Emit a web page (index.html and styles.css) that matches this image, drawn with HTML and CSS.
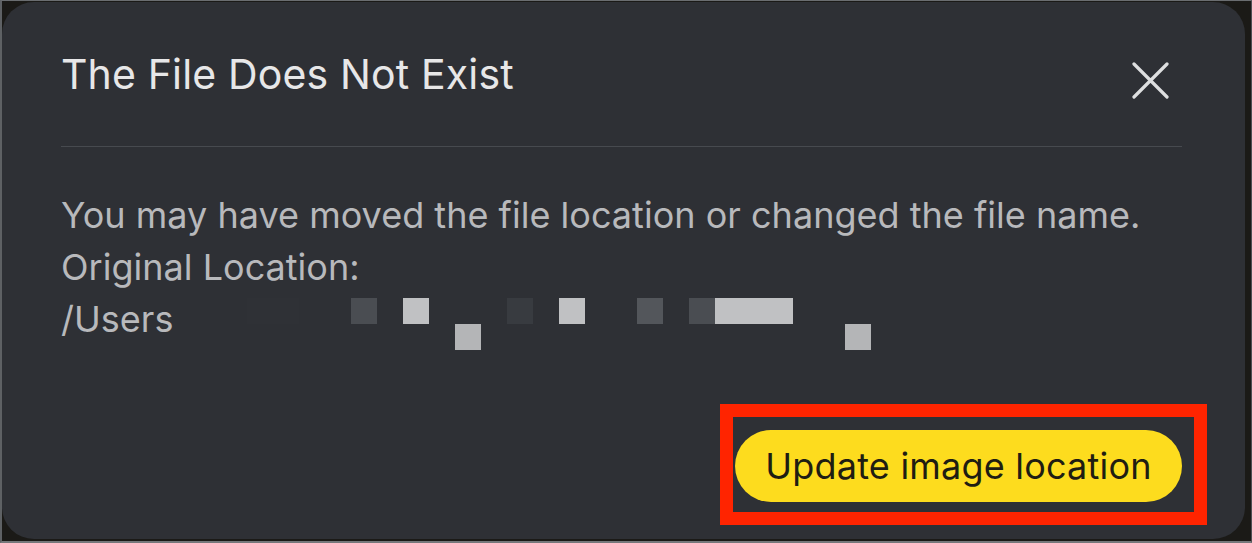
FILE: index.html
```html
<!DOCTYPE html>
<html lang="en">
<head>
<meta charset="utf-8">
<title>The File Does Not Exist</title>
<link rel="stylesheet" href="styles.css">
</head>
<body>
<div class="screen">
  <div class="dialog">
    <div class="header">
      <h1 class="title">The File Does Not Exist</h1>
      <button class="close" aria-label="Close">
        <svg width="37" height="37" viewBox="0 0 37 37" aria-hidden="true">
          <path d="M2 2 L35 35 M35 2 L2 35" stroke="#dedfe0" stroke-width="3.2" stroke-linecap="round" fill="none"/>
        </svg>
      </button>
    </div>
    <div class="divider"></div>
    <div class="body">
      <div class="line">You may have moved the file location or changed the file name.</div>
      <div class="line">Original Location:</div>
      <div class="line path">
        <span class="path-text">/Users</span>
        <div class="mosaic" aria-hidden="true">
          <span class="cell faint c0"></span>
          <span class="cell dark c4"></span>
          <span class="cell light c6"></span>
          <span class="cell light2 c8 r2"></span>
          <span class="cell darker c10"></span>
          <span class="cell light c12"></span>
          <span class="cell mid c15"></span>
          <span class="cell dark c17"></span>
          <span class="cell light c18"></span>
          <span class="cell light2 c23 r2"></span>
        </div>
      </div>
    </div>
    <div class="footer">
      <div class="highlight">
        <button class="primary">Update image location</button>
      </div>
    </div>
  </div>
</div>
</body>
</html>
```

FILE: styles.css
```css
* { box-sizing: border-box; }

html, body {
  margin: 0;
  padding: 0;
  background: #1c1a17;
}

.screen {
  width: 1252px;
  height: 543px;
  display: flex;
  border-top: 1px solid #6a6d70;
  border-left: 2px solid #5e6164;
  border-bottom: 2px solid #75787b;
  border-right: 1px solid #4e5053;
  padding: 1px 6px 2px 0;
  background: #1b1a17;
  font-family: Inter, "Liberation Sans", sans-serif;
}

.dialog {
  flex: 1;
  display: flex;
  flex-direction: column;
  background: #2e3035;
  border-radius: 32px;
  padding: 47px 63px 14px 59px;
}

.header {
  display: flex;
  justify-content: space-between;
  align-items: flex-start;
}

.title {
  margin: 0;
  font-size: 41px;
  line-height: 50px;
  font-weight: 400;
  color: #e7e7e8;
  letter-spacing: 0.15px;
}

.close {
  margin: 13px 13px 0 0;
  padding: 0;
  border: 0;
  background: none;
  width: 37px;
  height: 37px;
  display: block;
}

.close svg { display: block; }

.divider {
  margin-top: 47px;
  height: 1px;
  background: #474a4f;
}

.body {
  margin-top: 42px;
  color: #b8b9bc;
  font-size: 36px;
  line-height: 52px;
  letter-spacing: 0.02px;
}

.line { white-space: nowrap; }

.path {
  display: grid;
  grid-template-columns: 186px auto;
  align-items: start;
}

.mosaic {
  margin-top: 5px;
  display: grid;
  grid-template-columns: repeat(24, 26px);
  grid-template-rows: 26px 26px;
}

.cell { grid-row: 1; height: 26px; }
.cell.r2 { grid-row: 2; }

.c0 { grid-column: 1 / span 2; }
.c4 { grid-column: 5; }
.c6 { grid-column: 7; }
.c8 { grid-column: 9; }
.c10 { grid-column: 11; }
.c12 { grid-column: 13; }
.c15 { grid-column: 16; }
.c17 { grid-column: 18; }
.c18 { grid-column: 19 / span 3; }
.c23 { grid-column: 24; }

.faint { background: #2f3136; }
.dark { background: #4a4d52; }
.darker { background: #383b40; }
.mid { background: #53565b; }
.light { background: #c0c1c3; }
.light2 { background: #b4b5b7; }

.footer {
  margin-top: auto;
  display: flex;
  justify-content: flex-end;
  margin-right: -25px;
}

.highlight {
  border: 13px solid #ff2400;
  padding: 13px 12px 10px 2px;
}

.primary {
  display: block;
  width: 447px;
  height: 72px;
  border: 0;
  border-radius: 36px;
  background: #fddc1e;
  color: #1f1d12;
  font-family: Inter, "Liberation Sans", sans-serif;
  font-size: 36px;
  letter-spacing: 0.2px;
  text-align: center;
  padding: 0;
}
```
